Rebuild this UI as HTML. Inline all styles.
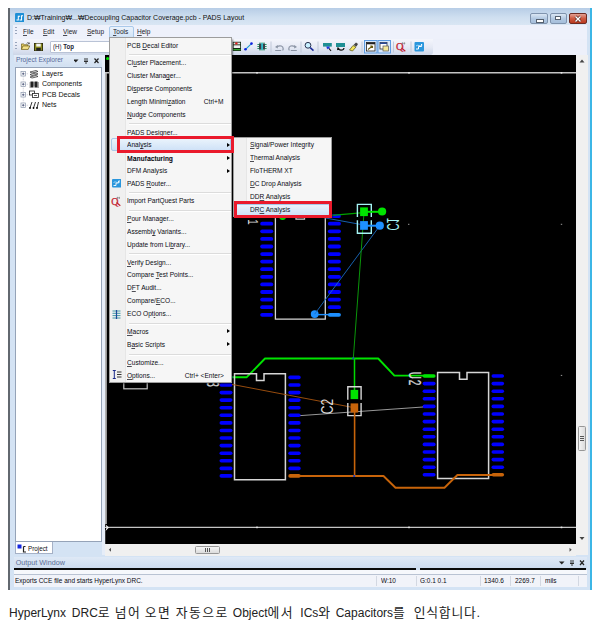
<!DOCTYPE html>
<html lang="ko">
<head>
<meta charset="utf-8">
<title>PADS Layout - DRC Analysis</title>
<style>
html,body{margin:0;padding:0;background:#fff;}
body{width:600px;height:631px;position:relative;overflow:hidden;font-family:"Liberation Sans","Noto Sans CJK KR",sans-serif;color:#000;}
.abs{position:absolute;}
#win{position:absolute;left:8px;top:8px;width:584px;height:582px;background:#d4e3f4;overflow:hidden;}
.t{position:absolute;white-space:nowrap;line-height:1;transform-origin:0 0;}
.n{transform:scaleX(0.875);}
/* title */
#titlebar{left:0;top:0;width:584px;height:17px;background:linear-gradient(#b7cde6,#cfdff0 55%,#d9e6f4);}
#title{left:18.9px;top:6.3px;font-size:8px;color:#111;transform:scaleX(0.872);}
/* menubar */
#menubar{left:5px;top:16.5px;width:574px;height:14.5px;background:#eef1fb;}
.mi{top:20.3px;font-size:7.5px;color:#1a1a2a;transform:scaleX(0.87);}
#toolrow{left:5px;top:31px;width:574px;height:15.5px;background:#edf0fa;}
#toolbar{left:5px;top:31px;width:420px;height:15.5px;background:linear-gradient(#f4f6fc,#e6eaf5 50%,#cdd6e8);border-radius:0 0 3px 0;}
/* panel */
#pehead{left:6px;top:47px;width:88px;height:11px;background:linear-gradient(#e4edf8,#d2e0f1);}
#tree{left:7px;top:59px;width:85px;height:473px;background:#fff;border:1px solid #95a3b8;}
.tr{font-size:7.2px;color:#111;left:34.2px;transform:scaleX(0.98);}
/* menus */
.menu{position:absolute;background:#f6f6f6;border:1px solid #9d9d9d;box-sizing:border-box;box-shadow:1.5px 1.5px 1.5px rgba(0,0,0,.35);}
.m{position:absolute;white-space:nowrap;line-height:1;font-size:7.2px;color:#0c0c14;transform:scaleX(0.915);transform-origin:0 0;}
.mr{transform-origin:100% 0;}
.sep{position:absolute;height:1px;background:#dcdcdc;border-bottom:1px solid #fff;}
.arr{position:absolute;width:0;height:0;border-left:3px solid #000;border-top:2.3px solid transparent;border-bottom:2.3px solid transparent;margin-top:-0.4px;}
.hl{position:absolute;background:linear-gradient(#eaf3fc,#cfe2f7);border:1px solid #a9c9ea;border-radius:2px;box-sizing:border-box;}
.red{position:absolute;border:3px solid #ea1a2c;box-sizing:border-box;}
u{text-decoration:underline;text-underline-offset:0.5px;text-decoration-thickness:0.5px;text-decoration-color:rgba(20,20,30,.75);}
#status{left:6px;top:566px;width:573px;height:13px;background:#f1f3f9;border-top:1px solid #b9c3d3;box-sizing:border-box;}
.st{top:569.8px;font-size:6.6px;color:#0a0a12;transform:scaleX(0.98);}
.vs{position:absolute;top:568px;width:1px;height:10px;background:#d3d8e2;}
#cap{position:absolute;left:0;top:601px;width:600px;height:24px;font-size:12px;color:#222;}
.cw{position:absolute;top:0;white-space:nowrap;line-height:24px;}
.k{font-size:12.8px;letter-spacing:1.5px;}
</style>
</head>
<body>
<div id="win">
  <div class="abs" id="titlebar"></div>
  <div class="abs" style="left:0;top:0;width:1.6px;height:581.5px;background:#62686f;"></div>
  <div class="abs" style="left:582.3px;top:0;width:1.4px;height:582px;background:#3cb6e6;"></div><div class="abs" style="left:583.6px;top:0;width:0.6px;height:582px;background:#2a3a44;"></div>
  <!-- app icon -->
  <svg class="abs" style="left:6.7px;top:5.2px" width="9.4" height="9.3" viewBox="0 0 10 10"><rect width="10" height="10" rx="1.2" fill="#1d8fd6"/><path d="M1.5 7.5h2v-4h2M4.8 7.5h2.2v-4.6h1.6" fill="none" stroke="#fff" stroke-width="1.1"/></svg>
  <div class="t" id="title">D:₩Training₩...₩Decoupling Capacitor Coverage.pcb - PADS Layout</div>
  <!-- window buttons -->
  <div class="abs" style="left:521.5px;top:5px;width:18px;height:10.5px;border:1px solid #7f93ad;border-radius:2px;box-sizing:border-box;background:linear-gradient(#dbe7f4,#b3c9e2 50%,#a5bedb);"></div>
  <div class="abs" style="left:527.5px;top:10.5px;width:6px;height:2px;background:#fff;border:0.5px solid #55606e;"></div>
  <div class="abs" style="left:541.5px;top:5px;width:17.5px;height:10.5px;border:1px solid #7f93ad;border-radius:2px;box-sizing:border-box;background:linear-gradient(#dbe7f4,#b3c9e2 50%,#a5bedb);"></div>
  <div class="abs" style="left:547px;top:7.5px;width:6px;height:4.5px;background:#fff;border:1px solid #55606e;box-sizing:border-box;"></div>
  <div class="abs" style="left:560.5px;top:5px;width:18px;height:10.5px;border:1px solid #6d2b22;border-radius:2px;box-sizing:border-box;background:linear-gradient(#e3a193,#cf5a41 50%,#b93a20);"></div>
  <svg class="abs" style="left:565.5px;top:6.5px" width="8" height="8" viewBox="0 0 8 8"><path d="M1.5 1.5l5 5M6.5 1.5l-5 5" stroke="#55211a" stroke-width="2.6"/><path d="M1.5 1.5l5 5M6.5 1.5l-5 5" stroke="#fff" stroke-width="1.4"/></svg>

  <div class="abs" id="menubar"></div>
  <div class="abs" id="toolrow"></div>
  <div class="abs" id="toolbar"></div>
  <!-- grips -->
  <div class="abs" style="left:7px;top:19px;width:1.5px;height:9px;background:repeating-linear-gradient(#9aa6bd 0 1.2px,transparent 1.2px 3px);"></div>
  <div class="abs" style="left:7px;top:34px;width:1.5px;height:9px;background:repeating-linear-gradient(#9aa6bd 0 1.2px,transparent 1.2px 3px);"></div>
  <div class="hl" style="left:101px;top:18px;width:24.5px;height:13px;border-radius:2px 2px 0 0;"></div>
  <div class="t mi" style="left:15.3px"><u>F</u>ile</div>
  <div class="t mi" style="left:34.9px"><u>E</u>dit</div>
  <div class="t mi" style="left:55.3px"><u>V</u>iew</div>
  <div class="t mi" style="left:79px"><u>S</u>etup</div>
  <div class="t mi" style="left:104.5px"><u>T</u>ools</div>
  <div class="t mi" style="left:129px"><u>H</u>elp</div>

  <!-- toolbar left: open, save, combo -->
  <svg class="abs" style="left:13px;top:34.2px" width="9.6" height="8.6" viewBox="0 0 12 11" preserveAspectRatio="none"><path d="M0.5 9.5v-7h3l1 1h4v2" fill="#e8cf6a" stroke="#6a5a14" stroke-width="0.9"/><path d="M0.5 9.5l2-4.5h8.5l-2 4.5z" fill="#f5e28a" stroke="#6a5a14" stroke-width="0.9"/><path d="M7 1.8c1.2-1.4 2.6-1.2 3.2.2M10.4 0.6v1.6h-1.6" fill="none" stroke="#222" stroke-width="0.8"/></svg>
  <svg class="abs" style="left:26px;top:34.8px" width="9" height="8.2" viewBox="0 0 10 10" preserveAspectRatio="none"><rect x="0.5" y="0.5" width="9" height="9" fill="#8a8a1e" stroke="#2c2c08" stroke-width="1"/><rect x="2.5" y="0.8" width="5" height="3.6" fill="#f4f4f4"/><rect x="2.5" y="6" width="5" height="3.5" fill="#222"/></svg>
  <div class="abs" style="left:42px;top:33px;width:86px;height:12px;background:#fff;border:1px solid #b9c3d6;box-sizing:border-box;border-radius:1px;"></div>
  <div class="t n" style="left:44.7px;top:35.4px;font-size:7px;color:#223;">(H) <b>Top</b></div>

  <!-- toolbar right icons -->
  <svg class="abs" style="left:222px;top:31px" width="212" height="16" viewBox="230 39 212 16">
    <rect x="232.800" y="41.800" width="8.200" height="9.200" fill="#142814"/><rect x="233.600" y="45.300" width="6.600" height="2.700" fill="#f2f2f2"/><rect x="233.300" y="49.200" width="7.200" height="1" fill="#3cc83c"/><rect x="233.600" y="42.600" width="6.600" height="1.800" fill="#e8e8e8"/><circle cx="236.400" cy="43.400" r="1.200" fill="#e02020"/>
    <path d="M245.500 49.300l6-5.700" stroke="#1a9ad0" stroke-width="1.100"/><circle cx="245.500" cy="49.300" r="1.300" fill="#1020e0"/><circle cx="251.500" cy="43.600" r="1.300" fill="#1020e0"/>
    <path d="M257.400 44.500h9.200M257.400 46.500h9.200M257.400 48.500h9.200M260 42.400v8.200M262 42.400v8.200M264 42.400v8.200" stroke="#2a9a6a" stroke-width="1"/><rect x="259" y="43.600" width="6" height="5.800" fill="#3a3f48"/><rect x="261.300" y="43.200" width="1.500" height="6.600" fill="#30d8e8"/>
    <path d="M271 41.5v11M301 41.5v11M318 41.5v11M362 41.5v11M393.5 41.5v11M411 41.5v11" stroke="#b7c0d2" stroke-width="0.8"/>
    <path d="M277.200 46.500c3-1.500 6-0.500 6 2.200c0 0.900-0.300 1.400-0.800 1.600" fill="none" stroke="#8a93a4" stroke-width="1.200"/><path d="M275 46.900l2.800-2v3.600z" fill="#8a93a4"/><path d="M275.200 50.500h6" stroke="#8a93a4" stroke-width="1"/>
    <path d="M294.800 46.500c-3-1.500-6-0.500-6 2.200c0 0.900 0.300 1.400 0.800 1.600" fill="none" stroke="#8a93a4" stroke-width="1.200"/><path d="M297 46.900l-2.800-2v3.600z" fill="#8a93a4"/><path d="M296.800 50.500h-6" stroke="#8a93a4" stroke-width="1"/>
    <circle cx="308" cy="45.300" r="2.900" fill="#c8f0ff" stroke="#2a3350" stroke-width="1"/><path d="M310.200 47.600l3.300 3" stroke="#1a2a9a" stroke-width="1.500"/>
    <rect x="323" y="43" width="8.800" height="3.600" fill="#1f8f94"/><path d="M326.300 46.600l3.400 0-0.300 2.400-1.400-0.600-0.800 1z" fill="#2038e0"/><path d="M329 48.500l2 2.300" stroke="#111" stroke-width="1.100"/>
    <rect x="336" y="43" width="9" height="4" fill="#1f8f94"/><path d="M338 47.500c0.500 3.500 5.500 3.500 6 0.500M338 47.300l-0.300 2.200 2-0.500" fill="none" stroke="#111" stroke-width="1.200"/>
    <path d="M349.500 50l3.500-4.500 3 1.500-3.500 4z" fill="#f2e35a" stroke="#55500f" stroke-width="0.700"/><path d="M353.500 45l2.500-2.500 2 1.500-1.500 2.500z" fill="#444"/>
    <rect x="364.500" y="40.500" width="12.500" height="12.500" fill="#d9e8fb" stroke="#5d9be0" stroke-width="1"/><rect x="366.500" y="42.500" width="8.500" height="8.500" fill="#fff" stroke="#222" stroke-width="0.800"/><rect x="366.500" y="42.500" width="8.500" height="1.800" fill="#222"/><path d="M368 49.500l4.500-3.500M372.500 46l-2.200 0M372.500 46v2" stroke="#6a5a10" stroke-width="1.100" fill="none"/>
    <rect x="378" y="40.500" width="12.500" height="12.500" fill="#d9e8fb" stroke="#5d9be0" stroke-width="1"/><rect x="380" y="42.500" width="7" height="6.500" fill="#fff" stroke="#333" stroke-width="0.800"/><rect x="380" y="42.500" width="7" height="1.500" fill="#2a4a9a"/><rect x="383" y="46" width="5.500" height="5" fill="#f3e79a" stroke="#555" stroke-width="0.700"/>
    <text x="396" y="50.300" font-family="Liberation Serif,serif" font-size="10.500" fill="#c4202e" stroke="#c4202e" stroke-width="0.250">Q</text><path d="M401.500 48l3.800 3.200" stroke="#c4202e" stroke-width="1.200"/><path d="M401.500 43.300h3.800M402.500 42.300v2.200M404.400 42.300v2.200" stroke="#777" stroke-width="0.600"/>
    <rect x="414.500" y="42" width="9.500" height="9.500" rx="1" fill="#2a96dc"/><path d="M416 49h2.500v-2.500h3v-2.500" fill="none" stroke="#fff" stroke-width="1"/><path d="M416 46c2-2 4 1 6.500-1" fill="none" stroke="#bfe6ff" stroke-width="0.800"/>
  </svg>

  <!-- project explorer -->
  <div class="abs" id="pehead"></div>
  <div class="t" style="left:7.5px;top:48.3px;font-size:7.2px;color:#55699a;transform:scaleX(0.92);">Project Explorer</div>
  <svg class="abs" style="left:66px;top:49px" width="28" height="8" viewBox="0 0 28 8"><path d="M-1 2.500h5.500l-2.750 3z" fill="#222"/><path d="M11 1v3.500M13 1v3.500M10 4.500h4M12 4.500v2.500" stroke="#222" stroke-width="0.900" fill="none"/><path d="M20.500 1.500l4 4.500M24.500 1.500l-4 4.500" stroke="#222" stroke-width="1.200"/></svg>
  <div class="abs" id="tree"></div>
  <!-- tree lines + boxes -->
  <svg class="abs" style="left:10px;top:60px" width="32" height="44" viewBox="18 68 32 44">
    <g fill="#fff" stroke="#8b97ac" stroke-width="0.700"><rect x="21" y="71.500" width="4.500" height="4.500"/><rect x="21" y="82" width="4.500" height="4.500"/><rect x="21" y="92.500" width="4.500" height="4.500"/><rect x="21" y="103" width="4.500" height="4.500"/></g>
    <path d="M22 73.750h2.500M23.250 72.500v2.500M22 84.250h2.500M23.250 83v2.500M22 94.750h2.500M23.250 93.500v2.500M22 105.250h2.500M23.250 104v2.500" stroke="#33406a" stroke-width="0.700"/>
    <path d="M23.250 76v6M23.250 86.500v6M23.250 97v6M25.500 73.750h2.500M25.500 84.250h2.500M25.500 94.750h2.500M25.500 105.250h2.500" stroke="#aab" stroke-width="0.600" stroke-dasharray="0.800 0.800"/>
    <!-- layers icon -->
    <path d="M30 72l6-1.500 2 1-6 1.500zM30 74.500l6-1.500 2 1-6 1.500zM30 77l6-1.500 2 1-6 1.500z" fill="#fff" stroke="#222" stroke-width="0.700"/>
    <!-- components icon -->
    <rect x="30.500" y="81.500" width="3" height="6" fill="#222"/><rect x="34.500" y="81.500" width="3" height="6" fill="#222"/><path d="M29.500 83h1M29.500 85h1M29.500 87h1M33.500 83h1M33.500 85h1M37.500 83h1.500M37.500 85h1.500M37.500 87h1.500" stroke="#222" stroke-width="0.800"/>
    <!-- decals icon -->
    <rect x="29.500" y="91" width="5" height="4" fill="#fff" stroke="#222" stroke-width="0.800"/><rect x="32.500" y="93.500" width="6" height="4" fill="#fff" stroke="#222" stroke-width="0.800"/><path d="M34 95.500h3" stroke="#222" stroke-width="0.700"/>
    <!-- nets icon -->
    <path d="M30 108l2-6M33.500 108l2-6M37 108l1.500-6" stroke="#222" stroke-width="0.900"/><circle cx="30" cy="108" r="0.900"/><circle cx="33.500" cy="108" r="0.900"/><circle cx="37" cy="108" r="0.900"/>
  </svg>
  <div class="t tr" style="top:61.61px">Layers</div>
  <div class="t tr" style="top:72.11px">Components</div>
  <div class="t tr" style="top:82.61px">PCB Decals</div>
  <div class="t tr" style="top:92.91px">Nets</div>
  <!-- project tab -->
  <div class="abs" style="left:7px;top:534px;width:38px;height:12px;background:#fff;border:1px solid #a5b1c6;border-top:none;box-sizing:border-box;"></div>
  <svg class="abs" style="left:9px;top:535.500px" width="10" height="9" viewBox="0 0 10 9"><rect x="0.500" y="0.500" width="4" height="4" fill="#1428e0"/><path d="M6.500 2.500v5.500h2.500M6.500 2.500h2" fill="none" stroke="#222" stroke-width="1.200"/></svg>
  <div class="t" style="left:20px;top:536.8px;font-size:7px;color:#111;transform:scaleX(0.9);">Project</div>

  <div class="abs" style="left:93.5px;top:47px;width:3.5px;height:500px;background:#e6edf8;"></div>
  <!-- canvas -->
  <svg class="abs" id="pcb" style="left:97px;top:47px" width="471" height="489" viewBox="105 55 471 489">
    <rect x="105" y="55" width="471" height="489" fill="#000"/>
    <path d="M105.900 524V72.800" fill="none" stroke="#b0b0b0" stroke-width="1.900"/><path d="M105 72.800H576M105 527.400H576" fill="none" stroke="#c4c4c4" stroke-width="1.400"/>
    <circle cx="107.600" cy="58.500" r="1.600" fill="#00e000"/>
    <path d="M105.300 524.300L109 527.400L105.300 531.200L106.600 527.600Z" fill="#f0f0f0"/><path d="M105.200 531.200V544" stroke="#000" stroke-width="1.400"/><path d="M105.100 531V544" stroke="#777" stroke-width="0.800"/>
    <!--PCB-->
    <path d="M275.400 212.500H296V219.200H304.500V212.500H325.300V319.100H275.400Z" fill="none" stroke="#d6d6d6" stroke-width="1.300"/>
    <rect x="260.2" y="214.2" width="13.0" height="3.8" rx="1.9" fill="#0000ff"/>
    <rect x="260.2" y="221.8" width="13.0" height="3.8" rx="1.9" fill="#0000ff"/>
    <rect x="260.2" y="229.4" width="13.0" height="3.8" rx="1.9" fill="#0000ff"/>
    <rect x="260.2" y="237.0" width="13.0" height="3.8" rx="1.9" fill="#0000ff"/>
    <rect x="260.2" y="244.6" width="13.0" height="3.8" rx="1.9" fill="#0000ff"/>
    <rect x="260.2" y="252.2" width="13.0" height="3.8" rx="1.9" fill="#0000ff"/>
    <rect x="260.2" y="259.7" width="13.0" height="3.8" rx="1.9" fill="#0000ff"/>
    <rect x="260.2" y="267.3" width="13.0" height="3.8" rx="1.9" fill="#0000ff"/>
    <rect x="260.2" y="274.9" width="13.0" height="3.8" rx="1.9" fill="#0000ff"/>
    <rect x="260.2" y="282.5" width="13.0" height="3.8" rx="1.9" fill="#0000ff"/>
    <rect x="260.2" y="290.1" width="13.0" height="3.8" rx="1.9" fill="#0000ff"/>
    <rect x="260.2" y="297.7" width="13.0" height="3.8" rx="1.9" fill="#0000ff"/>
    <rect x="260.2" y="305.3" width="13.0" height="3.8" rx="1.9" fill="#0000ff"/>
    <rect x="260.2" y="312.9" width="13.0" height="3.8" rx="1.9" fill="#0000ff"/>
    <rect x="327.9" y="214.2" width="13.0" height="3.8" rx="1.9" fill="#0000ff"/>
    <rect x="327.9" y="221.8" width="13.0" height="3.8" rx="1.9" fill="#0000ff"/>
    <rect x="327.9" y="229.4" width="13.0" height="3.8" rx="1.9" fill="#0000ff"/>
    <rect x="327.9" y="237.0" width="13.0" height="3.8" rx="1.9" fill="#0000ff"/>
    <rect x="327.9" y="244.6" width="13.0" height="3.8" rx="1.9" fill="#0000ff"/>
    <rect x="327.9" y="252.2" width="13.0" height="3.8" rx="1.9" fill="#0000ff"/>
    <rect x="327.9" y="259.7" width="13.0" height="3.8" rx="1.9" fill="#0000ff"/>
    <rect x="327.9" y="267.3" width="13.0" height="3.8" rx="1.9" fill="#0000ff"/>
    <rect x="327.9" y="274.9" width="13.0" height="3.8" rx="1.9" fill="#0000ff"/>
    <rect x="327.9" y="282.5" width="13.0" height="3.8" rx="1.9" fill="#0000ff"/>
    <rect x="327.9" y="290.1" width="13.0" height="3.8" rx="1.9" fill="#0000ff"/>
    <rect x="327.9" y="297.7" width="13.0" height="3.8" rx="1.9" fill="#0000ff"/>
    <rect x="327.9" y="305.3" width="13.0" height="3.8" rx="1.9" fill="#0000ff"/>
    <rect x="327.9" y="312.9" width="13.0" height="3.8" rx="1.9" fill="#1e90ff"/>
    <circle cx="282.600" cy="216.700" r="3.300" fill="#00e000"/>
    <text transform="translate(247.700 219.200) rotate(90) scale(0.700 1)" font-family="Liberation Sans,sans-serif" font-size="14" fill="#dcdcdc">1</text>
    <path d="M314.800 314.600H334" stroke="#1e90ff" stroke-width="1.400"/>
    <circle cx="314.700" cy="314.100" r="3.900" fill="#1e90ff"/>
    <path d="M332 215.300L360.500 212.800" stroke="#00a000" stroke-width="1.200"/>
    <path d="M325.500 218L360.500 224.400" stroke="#1a6ac0" stroke-width="0.900"/>
    <path d="M379.800 225.700L314.700 314.100" stroke="#1a6ac0" stroke-width="0.900"/>
    <path d="M363.900 214L353.300 358.500" stroke="#0a960a" stroke-width="1"/>
    <path d="M357.400 217V204.400H371.300V217M357.400 220.200V233.300H371.300V220.200" fill="none" stroke="#a4f4f4" stroke-width="1.400"/>
    <path d="M364 211.800H382" stroke="#00e400" stroke-width="2"/>
    <path d="M364 225.700H380" stroke="#1e90ff" stroke-width="2"/>
    <rect x="360.100" y="207.400" width="7.800" height="8.700" fill="#00e400"/>
    <rect x="360.100" y="221.100" width="7.800" height="8.700" fill="#1e90ff"/>
    <circle cx="382.100" cy="211.500" r="4.100" fill="#00e400"/>
    <circle cx="379.800" cy="225.700" r="4.100" fill="#1e90ff"/>
    <text transform="translate(386.600 230.600) scale(-1 1) rotate(-90) scale(0.640 1)" font-family="Liberation Sans,sans-serif" font-size="15.600" fill="#a4f4f4">C1</text>
    <path d="M232 377.200H246.800L265 358.500H378.200L394.400 375.600H430" fill="none" stroke="#00e400" stroke-width="1.900" stroke-linejoin="round"/>
    <path d="M354.500 358.500V392" stroke="#00d800" stroke-width="1.500"/>
    <rect x="352.400" y="357.300" width="1.800" height="2" fill="#2040c0"/>
    <rect x="123.800" y="360" width="23.400" height="28.800" fill="none" stroke="#c4c4c4" stroke-width="1.200"/>
    <path d="M234.500 373.800H256.500V380.400H264V373.800H285.400V479.800H234.500Z" fill="none" stroke="#d6d6d6" stroke-width="1.500"/>
    <rect x="219.5" y="375.6" width="13.0" height="3.6" rx="1.8" fill="#0000ff"/>
    <rect x="219.5" y="383.2" width="13.0" height="3.6" rx="1.8" fill="#0000ff"/>
    <rect x="219.5" y="390.8" width="13.0" height="3.6" rx="1.8" fill="#0000ff"/>
    <rect x="219.5" y="398.3" width="13.0" height="3.6" rx="1.8" fill="#0000ff"/>
    <rect x="219.5" y="405.9" width="13.0" height="3.6" rx="1.8" fill="#0000ff"/>
    <rect x="219.5" y="413.5" width="13.0" height="3.6" rx="1.8" fill="#0000ff"/>
    <rect x="219.5" y="421.1" width="13.0" height="3.6" rx="1.8" fill="#0000ff"/>
    <rect x="219.5" y="428.7" width="13.0" height="3.6" rx="1.8" fill="#0000ff"/>
    <rect x="219.5" y="436.2" width="13.0" height="3.6" rx="1.8" fill="#0000ff"/>
    <rect x="219.5" y="443.8" width="13.0" height="3.6" rx="1.8" fill="#0000ff"/>
    <rect x="219.5" y="451.4" width="13.0" height="3.6" rx="1.8" fill="#0000ff"/>
    <rect x="219.5" y="459.0" width="13.0" height="3.6" rx="1.8" fill="#0000ff"/>
    <rect x="219.5" y="466.6" width="13.0" height="3.6" rx="1.8" fill="#0000ff"/>
    <rect x="219.5" y="474.1" width="13.0" height="3.6" rx="1.8" fill="#0000ff"/>
    <rect x="288.3" y="375.6" width="12.4" height="3.6" rx="1.8" fill="#0000ff"/>
    <rect x="288.3" y="383.2" width="12.4" height="3.6" rx="1.8" fill="#0000ff"/>
    <rect x="288.3" y="390.8" width="12.4" height="3.6" rx="1.8" fill="#0000ff"/>
    <rect x="288.3" y="398.3" width="12.4" height="3.6" rx="1.8" fill="#0000ff"/>
    <rect x="288.3" y="405.9" width="12.4" height="3.6" rx="1.8" fill="#0000ff"/>
    <rect x="288.3" y="413.5" width="12.4" height="3.6" rx="1.8" fill="#0000ff"/>
    <rect x="288.3" y="421.1" width="12.4" height="3.6" rx="1.8" fill="#0000ff"/>
    <rect x="288.3" y="428.7" width="12.4" height="3.6" rx="1.8" fill="#0000ff"/>
    <rect x="288.3" y="436.2" width="12.4" height="3.6" rx="1.8" fill="#0000ff"/>
    <rect x="288.3" y="443.8" width="12.4" height="3.6" rx="1.8" fill="#0000ff"/>
    <rect x="288.3" y="451.4" width="12.4" height="3.6" rx="1.8" fill="#0000ff"/>
    <rect x="288.3" y="459.0" width="12.4" height="3.6" rx="1.8" fill="#0000ff"/>
    <rect x="288.3" y="466.6" width="12.4" height="3.6" rx="1.8" fill="#0000ff"/>
    <rect x="288.3" y="474.1" width="12.4" height="3.6" rx="1.8" fill="#c8640a"/>
    <text transform="translate(206.600 373.200) rotate(90) scale(0.640 1)" font-family="Liberation Sans,sans-serif" font-size="15.800" letter-spacing="1" fill="#d8d8d8" stroke="#d8d8d8" stroke-width="0.300">U3</text>
    <path d="M437.600 372.600H459.500V379.200H467V372.600H488.600V478.600H437.600Z" fill="none" stroke="#d6d6d6" stroke-width="1.500"/>
    <rect x="422.6" y="374.2" width="13.0" height="3.6" rx="1.8" fill="#00e400"/>
    <rect x="422.6" y="381.8" width="13.0" height="3.6" rx="1.8" fill="#0000ff"/>
    <rect x="422.6" y="389.4" width="13.0" height="3.6" rx="1.8" fill="#0000ff"/>
    <rect x="422.6" y="397.0" width="13.0" height="3.6" rx="1.8" fill="#0000ff"/>
    <rect x="422.6" y="404.6" width="13.0" height="3.6" rx="1.8" fill="#0000ff"/>
    <rect x="422.6" y="412.2" width="13.0" height="3.6" rx="1.8" fill="#0000ff"/>
    <rect x="422.6" y="419.8" width="13.0" height="3.6" rx="1.8" fill="#0000ff"/>
    <rect x="422.6" y="427.4" width="13.0" height="3.6" rx="1.8" fill="#0000ff"/>
    <rect x="422.6" y="435.0" width="13.0" height="3.6" rx="1.8" fill="#0000ff"/>
    <rect x="422.6" y="442.6" width="13.0" height="3.6" rx="1.8" fill="#0000ff"/>
    <rect x="422.6" y="450.2" width="13.0" height="3.6" rx="1.8" fill="#0000ff"/>
    <rect x="422.6" y="457.8" width="13.0" height="3.6" rx="1.8" fill="#0000ff"/>
    <rect x="422.6" y="465.4" width="13.0" height="3.6" rx="1.8" fill="#0000ff"/>
    <rect x="422.6" y="473.0" width="13.0" height="3.6" rx="1.8" fill="#0000ff"/>
    <rect x="491.5" y="374.2" width="12.6" height="3.6" rx="1.8" fill="#0000ff"/>
    <rect x="491.5" y="381.8" width="12.6" height="3.6" rx="1.8" fill="#0000ff"/>
    <rect x="491.5" y="389.4" width="12.6" height="3.6" rx="1.8" fill="#0000ff"/>
    <rect x="491.5" y="397.0" width="12.6" height="3.6" rx="1.8" fill="#0000ff"/>
    <rect x="491.5" y="404.6" width="12.6" height="3.6" rx="1.8" fill="#0000ff"/>
    <rect x="491.5" y="412.2" width="12.6" height="3.6" rx="1.8" fill="#0000ff"/>
    <rect x="491.5" y="419.8" width="12.6" height="3.6" rx="1.8" fill="#0000ff"/>
    <rect x="491.5" y="427.4" width="12.6" height="3.6" rx="1.8" fill="#0000ff"/>
    <rect x="491.5" y="435.0" width="12.6" height="3.6" rx="1.8" fill="#0000ff"/>
    <rect x="491.5" y="442.6" width="12.6" height="3.6" rx="1.8" fill="#0000ff"/>
    <rect x="491.5" y="450.2" width="12.6" height="3.6" rx="1.8" fill="#0000ff"/>
    <rect x="491.5" y="457.8" width="12.6" height="3.6" rx="1.8" fill="#0000ff"/>
    <rect x="491.5" y="465.4" width="12.6" height="3.6" rx="1.8" fill="#0000ff"/>
    <rect x="491.5" y="473.0" width="12.6" height="3.6" rx="1.8" fill="#c8640a"/>
    <text transform="translate(409.300 371.800) rotate(90) scale(0.640 1)" font-family="Liberation Sans,sans-serif" font-size="15.800" letter-spacing="1" fill="#d8d8d8" stroke="#d8d8d8" stroke-width="0.300">U2</text>
    <path d="M232 384.400L351 407.100" stroke="#a85510" stroke-width="0.900"/>
    <path d="M300.400 415.600L423 407" stroke="#a8a8a8" stroke-width="0.900"/>
    <path d="M347.800 399.700V386.700H361.100V399.700M347.800 402.900V415.600H361.100V402.900" fill="none" stroke="#d6d6d6" stroke-width="1.400"/>
    <rect x="350.600" y="389.900" width="7.600" height="9.200" fill="#00e400"/>
    <rect x="350.600" y="403.400" width="7.600" height="9.100" fill="#c8640a"/>
    <text transform="translate(332.900 414.200) rotate(-90) scale(0.740 1)" font-family="Liberation Sans,sans-serif" font-size="16.300" fill="#d8d8d8">C2</text>
    <path d="M354.600 412V476" stroke="#c8640a" stroke-width="1.600"/>
    <path d="M294 476H383.500L395.500 487.700H444.500L457.400 475H498" fill="none" stroke="#c8640a" stroke-width="1.900" stroke-linejoin="round"/>
    <rect x="353.300" y="475" width="1.800" height="2" fill="#2040c0"/>
    <rect x="408.0" y="223.8" width="1.400" height="1" fill="#9a9a9a"/>
    <rect x="560.8" y="223.8" width="1.400" height="1" fill="#9a9a9a"/>
    <rect x="560.8" y="374.9" width="1.400" height="1" fill="#9a9a9a"/>
    <rect x="256.2" y="72" width="1.600" height="1.600" fill="#e8e8e8"/>
    <rect x="256.2" y="526.600" width="1.600" height="1.600" fill="#e8e8e8"/>
    <rect x="408.2" y="72" width="1.600" height="1.600" fill="#e8e8e8"/>
    <rect x="408.2" y="526.600" width="1.600" height="1.600" fill="#e8e8e8"/>
    <rect x="560.7" y="72" width="1.600" height="1.600" fill="#e8e8e8"/>
    <rect x="560.7" y="526.600" width="1.600" height="1.600" fill="#e8e8e8"/>
    <!--/PCB-->
  </svg>

  <!--MENU-->
  <div class="menu" style="left:101.3px;top:29.4px;width:123.1px;height:345.6px;">
  <div class="abs" style="left:0;top:0;width:14.500px;height:343.6px;background:#f0f0f0;border-right:1px solid #e6e6e6;"></div>
  <div class="hl" style="left:1.0px;top:99.9px;width:120.2px;height:13px;"></div>
  <div class="sep" style="left:18.500px;top:15.4px;width:102.1px;"></div>
  <div class="sep" style="left:18.500px;top:84.2px;width:102.1px;"></div>
  <div class="sep" style="left:18.500px;top:153.8px;width:102.1px;"></div>
  <div class="sep" style="left:18.500px;top:171.5px;width:102.1px;"></div>
  <div class="sep" style="left:18.500px;top:214.9px;width:102.1px;"></div>
  <div class="sep" style="left:18.500px;top:284.5px;width:102.1px;"></div>
  <div class="sep" style="left:18.500px;top:315.3px;width:102.1px;"></div>
  <div class="m" style="left:17.1px;top:3.21px;">PCB <u>D</u>ecal Editor</div>
  <div class="m" style="left:17.1px;top:20.71px;">Cl<u>u</u>ster Placement...</div>
  <div class="m" style="left:17.1px;top:33.61px;">Cluster Mana<u>g</u>er...</div>
  <div class="m" style="left:17.1px;top:46.86px;">Di<u>s</u>perse Components</div>
  <div class="m" style="left:17.1px;top:59.71px;">Length Minimi<u>z</u>ation</div>
  <div class="m mr" style="right:7.6px;top:59.71px;">Ctrl+M</div>
  <div class="m" style="left:17.1px;top:72.51px;"><u>N</u>udge Components</div>
  <div class="m" style="left:17.1px;top:90.21px;">PADS Designer...</div>
  <div class="m" style="left:17.1px;top:103.01px;">Anal<u>y</u>sis</div>
  <div class="arr" style="left:116.7px;top:104.5px;"></div>
  <div class="m" style="left:17.1px;top:116.16px;letter-spacing:0.35px;text-shadow:0.3px 0 0 #15151f;">Manufacturing</div>
  <div class="arr" style="left:116.7px;top:117.7px;"></div>
  <div class="m" style="left:17.1px;top:129.01px;">DFM Analysis</div>
  <div class="arr" style="left:116.7px;top:130.5px;"></div>
  <div class="m" style="left:17.1px;top:141.81px;">PADS <u>R</u>outer...</div>
  <div class="m" style="left:17.1px;top:158.96px;">Import PartQuest Parts</div>
  <div class="m" style="left:17.1px;top:176.91px;"><u>P</u>our Manager...</div>
  <div class="m" style="left:17.1px;top:189.71px;">Assembl<u>y</u> Variants...</div>
  <div class="m" style="left:17.1px;top:202.91px;">Update from Li<u>b</u>rary...</div>
  <div class="m" style="left:17.1px;top:220.11px;"><u>V</u>erify Design...</div>
  <div class="m" style="left:17.1px;top:233.01px;">Compare <u>T</u>est Points...</div>
  <div class="m" style="left:17.1px;top:245.81px;">D<u>F</u>T Audit...</div>
  <div class="m" style="left:17.1px;top:258.81px;">Compare/<u>E</u>CO...</div>
  <div class="m" style="left:17.1px;top:271.61px;">ECO Opt<u>i</u>ons...</div>
  <div class="m" style="left:17.1px;top:289.41px;"><u>M</u>acros</div>
  <div class="arr" style="left:116.7px;top:290.9px;"></div>
  <div class="m" style="left:17.1px;top:302.71px;">B<u>a</u>sic Scripts</div>
  <div class="arr" style="left:116.7px;top:304.2px;"></div>
  <div class="m" style="left:17.1px;top:320.21px;"><u>C</u>ustomize...</div>
  <div class="m" style="left:17.1px;top:333.51px;"><u>O</u>ptions...</div>
  <div class="m mr" style="right:7.6px;top:333.51px;">Ctrl+ &lt;Enter&gt;</div>
  <svg class="abs" style="left:1.7px;top:141.1px" width="9.500" height="8.500" viewBox="0 0 9.500 8.500"><rect width="9.500" height="8.500" rx="1" fill="#2a96dc"/><path d="M1.500 6.500h2.500v-2.500h2.500v-2h1.500" fill="none" stroke="#fff" stroke-width="0.900"/><path d="M1.500 3.500c2-2 4 1.500 6.500-0.500" fill="none" stroke="#c8ecff" stroke-width="0.700"/></svg>
  <svg class="abs" style="left:1.2px;top:157.6px" width="11" height="11" viewBox="0 0 11 11"><text x="0.300" y="8.600" font-family="Liberation Serif,serif" font-size="10" fill="#c4202e" stroke="#c4202e" stroke-width="0.250">Q</text><path d="M5.500 6.500l3.800 3.300" stroke="#c4202e" stroke-width="1.200"/><path d="M5.500 1.800h3.500M6.500 0.800v2.200M8.300 0.800v2.200" stroke="#777" stroke-width="0.600"/></svg>
  <svg class="abs" style="left:2.0px;top:271.4px" width="9" height="9" viewBox="0 0 9 9"><path d="M0.500 1h8M0.500 3.300h8M0.500 5.600h8M0.500 8h8" stroke="#2a8f9f" stroke-width="0.900"/><path d="M4.500 0v9" stroke="#1c4a9a" stroke-width="1.200"/></svg>
  <svg class="abs" style="left:1.7px;top:332.1px" width="10" height="9" viewBox="0 0 10 9"><path d="M0.800 0.500h3M2.300 0.500v8M0.800 8.500h3" stroke="#1a2a8a" stroke-width="1"/><path d="M5 2h4.500M5 4.500h4.500M5 7h4.500" stroke="#333" stroke-width="1"/></svg>
  </div>
  <div class="menu" style="left:224.7px;top:129.4px;width:99.6px;height:79.8px;">
  <div class="abs" style="left:0;top:0;width:12.500px;height:77.8px;background:#f0f0f0;border-right:1px solid #e6e6e6;"></div>
  <div class="hl" style="left:1.500px;top:65.2px;width:94.6px;height:12.500px;"></div>
  <div class="m" style="left:16.3px;top:3.01px;"><u>S</u>ignal/Power Integrity</div>
  <div class="m" style="left:16.3px;top:15.91px;"><u>T</u>hermal Analysis</div>
  <div class="m" style="left:16.3px;top:28.81px;">FloTHERM XT</div>
  <div class="m" style="left:16.3px;top:41.71px;"><u>D</u>C Drop Analysis</div>
  <div class="m" style="left:16.3px;top:54.61px;">DD<u>R</u> Analysis</div>
  <div class="m" style="left:16.3px;top:67.51px;">DR<u>C</u> Analysis</div>
  </div>
  <div class="red" style="left:108.7px;top:128.0px;width:117.0px;height:17.0px;"></div>
  <div class="red" style="left:226.0px;top:193.0px;width:97.8px;height:17.3px;"></div>
  <!--/MENU-->
  <!-- scrollbars -->
  <div class="abs" style="left:568px;top:47px;width:11.500px;height:500px;background:#f0f0f0;"></div>
  <div class="abs" style="left:97px;top:536px;width:471px;height:11.500px;background:#f0f0f0;"></div>
  <div class="abs" style="left:569.500px;top:417.500px;width:8.500px;height:25px;border:1px solid #979797;border-radius:1.500px;box-sizing:border-box;background:linear-gradient(90deg,#f4f4f4,#dcdcdc);"></div>
  <div class="abs" style="left:572px;top:427.500px;width:3.500px;height:5px;background:repeating-linear-gradient(#555 0 1px,transparent 1px 2px);"></div>
  <div class="abs" style="left:187px;top:537.500px;width:25px;height:8.500px;border:1px solid #979797;border-radius:1.500px;box-sizing:border-box;background:linear-gradient(#f4f4f4,#dcdcdc);"></div>
  <div class="abs" style="left:197px;top:540px;width:5px;height:3.500px;background:repeating-linear-gradient(90deg,#555 0 1px,transparent 1px 2px);"></div>
  <svg class="abs" style="left:568px;top:47px" width="12" height="500" viewBox="0 0 12 500"><path d="M3.500 7.500l2.500-3 2.500 3zM3.500 482l2.500 3 2.500-3z" fill="#444"/></svg>
  <svg class="abs" style="left:97px;top:536px" width="471" height="12" viewBox="0 0 471 12"><path d="M6 3.800l-2.200 2 2.200 2zM464.500 3.800l2.200 2-2.200 2z" fill="#555"/></svg>

  <!-- output window -->
  <div class="abs" style="left:6px;top:548.500px;width:573px;height:12px;background:linear-gradient(#dfe9f6,#cbdaee);"></div>
  <div class="t" style="left:7.700px;top:551.2px;font-size:7.2px;color:#5a6c94;">Output Window</div>
  <svg class="abs" style="left:549px;top:551px" width="30" height="8" viewBox="0 0 30 8"><path d="M2 2.500h5.500l-2.750 3z" fill="#222"/><path d="M14 1v3.500M16 1v3.500M13 4.500h4M15 4.500v2.500" stroke="#222" stroke-width="0.900" fill="none"/><path d="M23 1.500l4 4.500M27 1.500l-4 4.500" stroke="#222" stroke-width="1.200"/></svg>
  <div class="abs" style="left:6px;top:560px;width:572px;height:2px;background:#0a0a0a;"></div>
  <div class="abs" style="left:408px;top:560px;width:4px;height:2px;background:#cfe0f3;"></div>
  <div class="abs" style="left:6px;top:562px;width:573px;height:4px;background:#f6f8fc;"></div>
  <div class="abs" id="status"></div>
  <div class="t st" style="left:6.500px;">Exports CCE file and starts HyperLynx DRC.</div>
  <div class="t st" style="left:373px;">W:10</div>
  <div class="t st" style="left:412px;">G:0.1 0.1</div>
  <div class="t st" style="left:476px;">1340.6</div>
  <div class="t st" style="left:506.500px;">2269.7</div>
  <div class="t st" style="left:536.500px;">mils</div>
  <div class="vs" style="left:368px"></div><div class="vs" style="left:408px"></div><div class="vs" style="left:472px"></div><div class="vs" style="left:502px"></div><div class="vs" style="left:532px"></div><div class="vs" style="left:570px"></div>
</div>
<div id="cap"><span class="cw" style="left:9.1px">HyperLynx</span><span class="cw" style="left:71.8px">DRC<span class="k">로</span></span><span class="cw" style="left:114.7px"><span class="k">넘어</span></span><span class="cw" style="left:144.7px"><span class="k">오면</span></span><span class="cw" style="left:175.8px"><span class="k">자동으로</span></span><span class="cw" style="left:232.8px">Object<span class="k">에서</span></span><span class="cw" style="left:300.3px">ICs<span class="k">와</span></span><span class="cw" style="left:335.7px">Capacitors<span class="k">를</span></span><span class="cw" style="left:413.7px"><span class="k" style="letter-spacing:0.8px">인식합니다.</span></span></div>
</body>
</html>
